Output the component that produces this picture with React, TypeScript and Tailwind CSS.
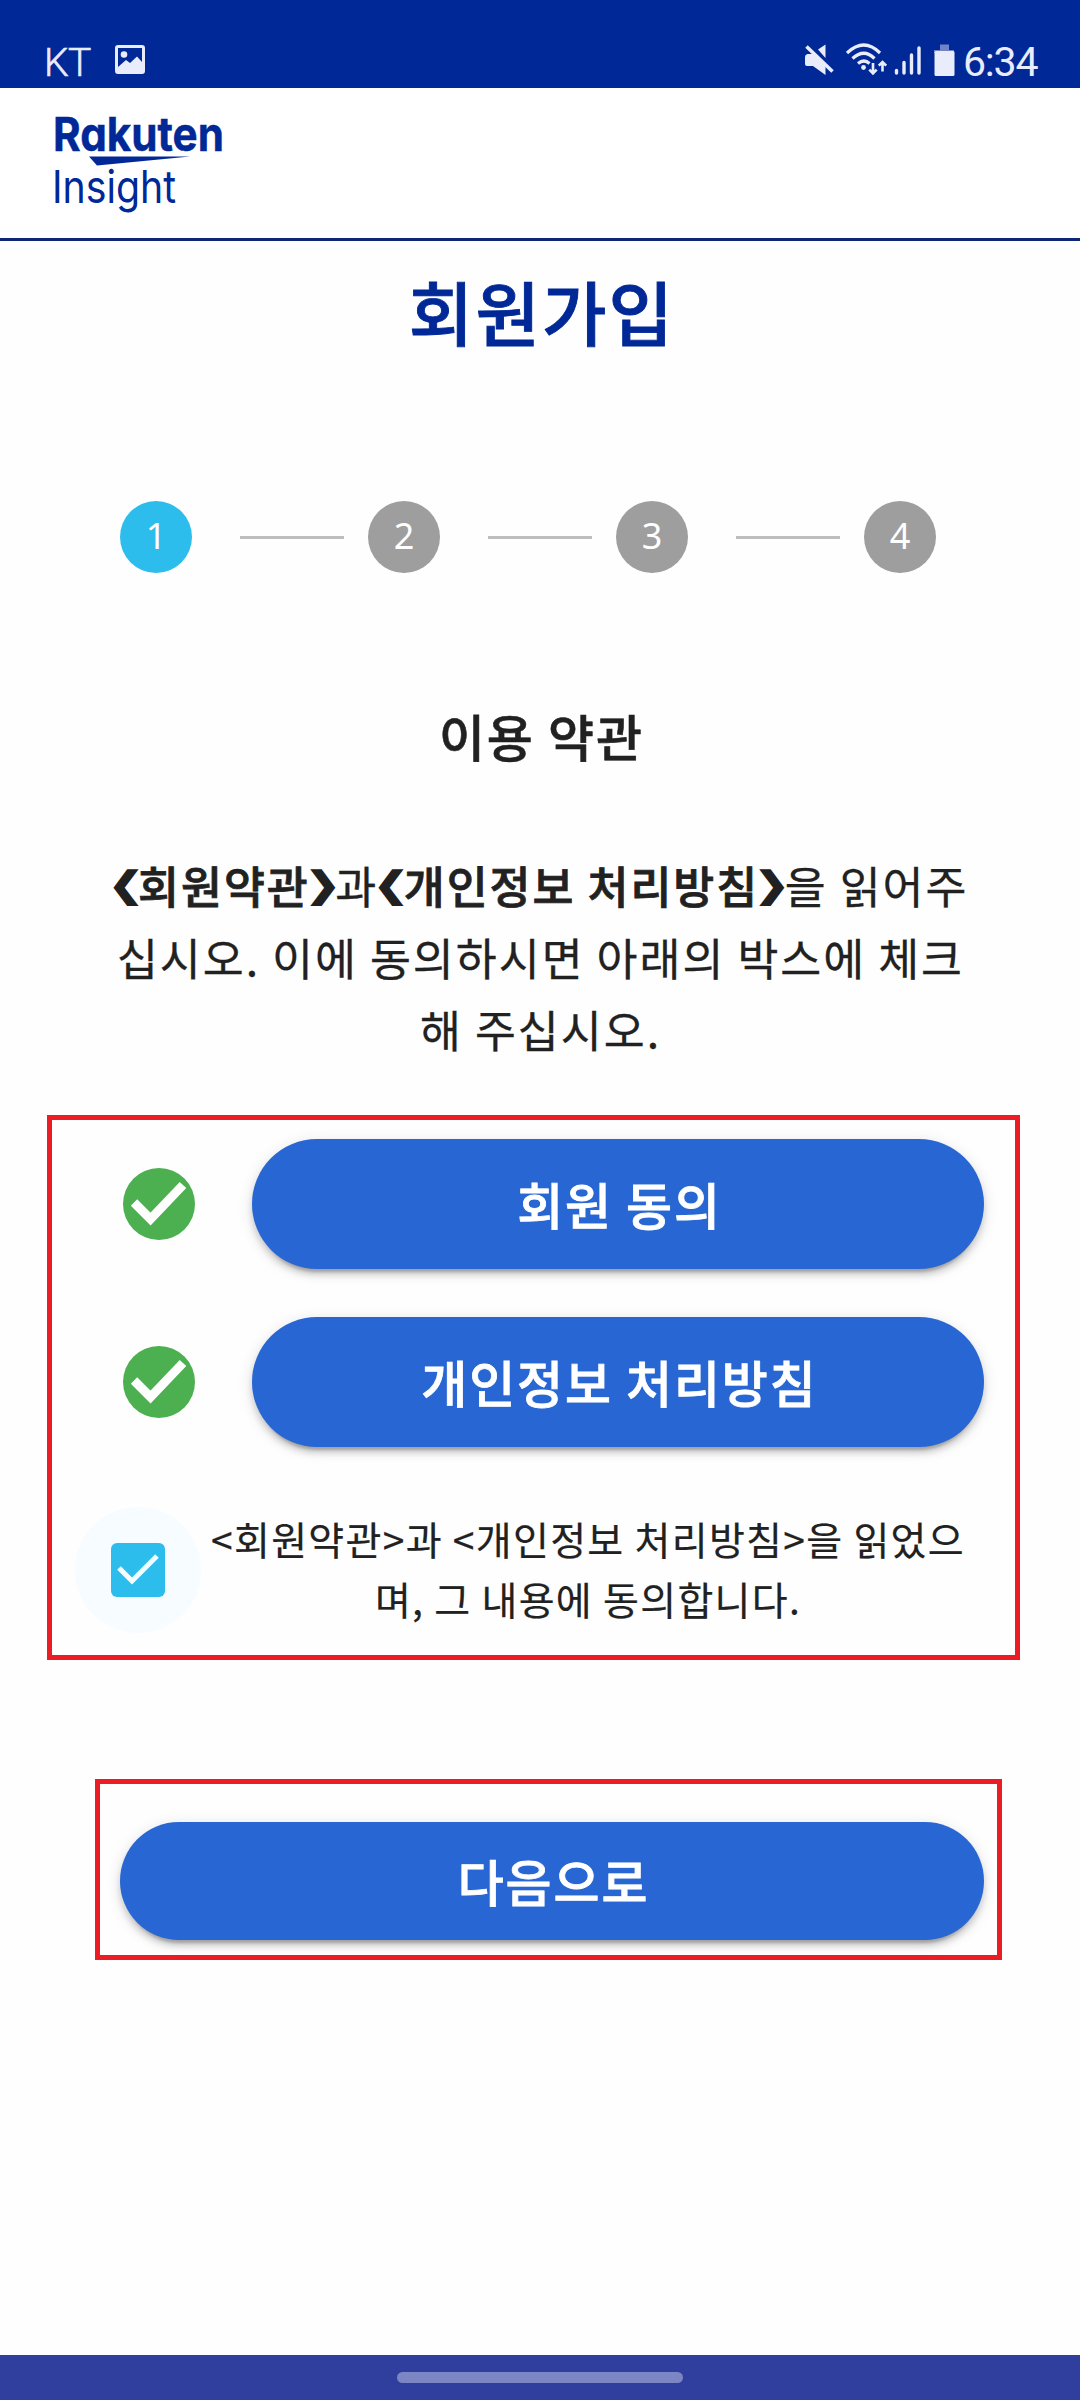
import React from "react";

function StatusBar() {
  return (
    <div className="flex h-[88px] items-start justify-between bg-[#002896] text-[#e9edfb]">
      <div className="flex pl-[44px] pt-[38px]">
        <span className="mt-[1px] w-[71px] font-['Roboto'] text-[39px] leading-[48px] font-light tracking-[-0.5px] [-webkit-text-stroke:0.6px]">
          KT
        </span>
        <svg className="mt-[7px]" width="30" height="29" viewBox="0 0 30 29">
          <path
            fill="currentColor"
            fillRule="evenodd"
            d="M3 0H27Q30 0 30 3V26Q30 29 27 29H3Q0 29 0 26V3Q0 0 3 0ZM3 3V22L11 15L15 18L22 11.5L27 17V3ZM9 6.2a3.3 3.3 0 1 1 0 6.6a3.3 3.3 0 1 1 0-6.6Z"
          />
        </svg>
      </div>
      <div className="flex pr-[41px]">
        <svg width="152" height="44" viewBox="0 0 152 44" className="mt-[38px]">
          {/* muted speaker */}
          <path fill="currentColor" d="M0 19Q0 16.5 2.500 16H8L20.500 27V37L8 28H2Q0 28 0 26ZM13 11.5L20.5 6.5V20Z" />
          <path d="M3.500 8L29 32" stroke="#002896" strokeWidth="3" />
          <path d="M1.5 8.5L27.5 33.5" stroke="currentColor" strokeWidth="3.6" />
          {/* wifi with traffic arrows */}
          <g fill="none" stroke="currentColor" strokeWidth="3.2">
            <path d="M42 15Q59 -1 75 15" />
            <path d="M47.5 20.5Q59 10 69.5 20.5" />
            <path d="M53 25.5Q59 20.5 64.5 25.5" />
            <path d="M68 25V35M64.3 31.7L68 35.5L71.7 31.7M77.5 33.5V24M73.8 27.7L77.5 24L81.2 27.7" strokeWidth="2.6" />
          </g>
          <circle cx="58.5" cy="29.5" r="2.4" fill="currentColor" />
          {/* signal strength */}
          <path
            d="M91.5 32.5V35M99 24.5V35M106.5 17V35M114 10V35"
            stroke="currentColor"
            strokeWidth="3.4"
            strokeLinecap="round"
          />
          {/* battery */}
          <path d="M135 6.5H144V12H149V15H129V12H135Z" fill="#7182c8" />
          <rect x="129.500" y="13" width="20" height="25" rx="1.500" fill="currentColor" />
        </svg>
        <span className="ml-[6px] mt-[38px] w-[76px] whitespace-nowrap font-['Roboto'] text-[41px] leading-[48px] tracking-[-1.2px]">
          6:34
        </span>
      </div>
    </div>
  );
}

function Logo() {
  return (
    <svg
      width="220"
      height="120"
      viewBox="-4 -4 220 120"
      fill="#002896"
      className="overflow-visible font-['Inter'] [font-feature-settings:'cv11']"
    >
      <text
        x="2"
        y="46"
        fontSize="47"
        fontWeight="700"
        stroke="#002896"
        strokeWidth="0.5"
        textLength="171"
        lengthAdjust="spacingAndGlyphs"
      >
        Rakuten
      </text>
      <path d="M38 51.500H139L46 60.500Z" />
      <text x="1" y="98" fontSize="45" textLength="124" lengthAdjust="spacingAndGlyphs">
        Insight
      </text>
    </svg>
  );
}

function Stepper() {
  return (
    <div className="mt-[140px] flex items-center pl-[120px]">
      {[1, 2, 3, 4].map((n) => (
        <React.Fragment key={n}>
          {n > 1 && <div className="ml-[48px] mr-[24px] h-[3px] w-[104px] bg-[#bdbdbd]" />}
          <div
            className={
              "flex size-[72px] items-center justify-center rounded-full pb-[2px] font-['Noto_Sans'] text-[36px] leading-none text-white " +
              (n === 1 ? "bg-[#2dbdec]" : "bg-[#9e9e9e]")
            }
          >
            {n}
          </div>
        </React.Fragment>
      ))}
    </div>
  );
}

const buttonStyle =
  "shrink-0 whitespace-nowrap rounded-full bg-[#2766d3] pb-[2px] pl-[3px] text-[50px] leading-none font-medium tracking-[1.9px] text-white [-webkit-text-stroke:0.8px] shadow-[0_9px_3px_-6px_rgba(0,0,0,0.2),0_6px_6px_0_rgba(0,0,0,0.14),0_3px_15px_0_rgba(0,0,0,0.12)]";

function AgreementRow({ label }: { label: string }) {
  return (
    <div className="flex h-[130px] items-center">
      <svg className="ml-[71px] size-[72px] shrink-0" viewBox="0 0 72 72">
        <circle cx="36" cy="36" r="36" fill="#4caf50" />
        <path d="M11 34.500L27.500 51L60 17" fill="none" stroke="#fff" strokeWidth="9" />
      </svg>
      <button className={"ml-[57px] h-[130px] w-[732px] " + buttonStyle}>{label}</button>
    </div>
  );
}

function Angle({ children }: { children: string }) {
  return (
    <span className="inline-flex h-[36px] w-[25.500px] scale-x-[1.15] items-center justify-center align-[7px] font-['DejaVu_Sans'] text-[35px] leading-none font-bold tracking-normal [-webkit-text-stroke:1.8px]">
      {children}
    </span>
  );
}

export default function App() {
  return (
    <div className="flex h-[2400px] w-[1080px] flex-col overflow-hidden bg-[#fefefe] font-['Noto_Sans_CJK_KR',sans-serif] text-[#212121]">
      <StatusBar />
      <header className="h-[153px] border-b-[3px] border-[#0f2674] bg-white pl-[47px] pt-[13px]">
        <Logo />
      </header>
      <main className="flex flex-1 flex-col">
        <h1 className="mt-[20px] pl-[4px] text-center text-[70px] leading-[100px] font-medium tracking-[2.2px] text-[#002896] [-webkit-text-stroke:0.9px]">
          회원가입
        </h1>
        <Stepper />
        <h2 className="mt-[126px] h-[72px] pl-[3px] text-center text-[50px] leading-[72px] font-medium tracking-[2px] [-webkit-text-stroke:0.6px]">
          이용 약관
        </h2>
        <p className="mt-[78px] h-[216px] whitespace-nowrap pl-[1px] text-center text-[44.500px] leading-[72px] tracking-[2px] [-webkit-text-stroke:0.3px]">
          <b className="font-medium [-webkit-text-stroke:0.8px]">
            <Angle>❮</Angle>회원약관<Angle>❯</Angle>
          </b>
          과
          <b className="font-medium [-webkit-text-stroke:0.8px]">
            <Angle>❮</Angle>개인정보 처리방침<Angle>❯</Angle>
          </b>
          을 읽어주
          <br />
          십시오. 이에 동의하시면 아래의 박스에 체크
          <br />
          해 주십시오.
        </p>
        <section className="ml-[47px] mt-[50px] h-[545px] w-[973px] border-[5px] border-[#eb1c24] pt-[19px]">
          <div className="flex flex-col gap-[48px]">
            <AgreementRow label="회원 동의" />
            <AgreementRow label="개인정보 처리방침" />
          </div>
          <div className="mt-[60px] flex items-center">
            <div className="ml-[23px] flex size-[126px] shrink-0 items-center justify-center rounded-full bg-[#f6fcff]">
              <svg width="54" height="54" viewBox="0 0 54 54">
                <rect width="54" height="54" rx="6" fill="#2dbdec" />
                <path d="M8 25L21 38L46 13" fill="none" stroke="#f3fcff" strokeWidth="5" />
              </svg>
            </div>
            <p className="ml-[7px] w-[760px] whitespace-nowrap pb-[4px] text-center text-[39px] leading-[60px] tracking-[1.3px] [-webkit-text-stroke:0.2px]">
              &lt;회원약관&gt;과 &lt;개인정보 처리방침&gt;을 읽었으
              <br />
              며, 그 내용에 동의합니다.
            </p>
          </div>
        </section>
        <section className="ml-[95px] mt-[119px] h-[181px] w-[907px] border-[5px] border-[#eb1c24] pl-[20px] pt-[38px]">
          <button className={"h-[118px] w-[864px] " + buttonStyle}>다음으로</button>
        </section>
      </main>
      <footer className="flex h-[45px] justify-center bg-[#303e9e] pt-[17px]">
        <div className="h-[11px] w-[286px] rounded-full bg-[#7c86c4]" />
      </footer>
    </div>
  );
}
